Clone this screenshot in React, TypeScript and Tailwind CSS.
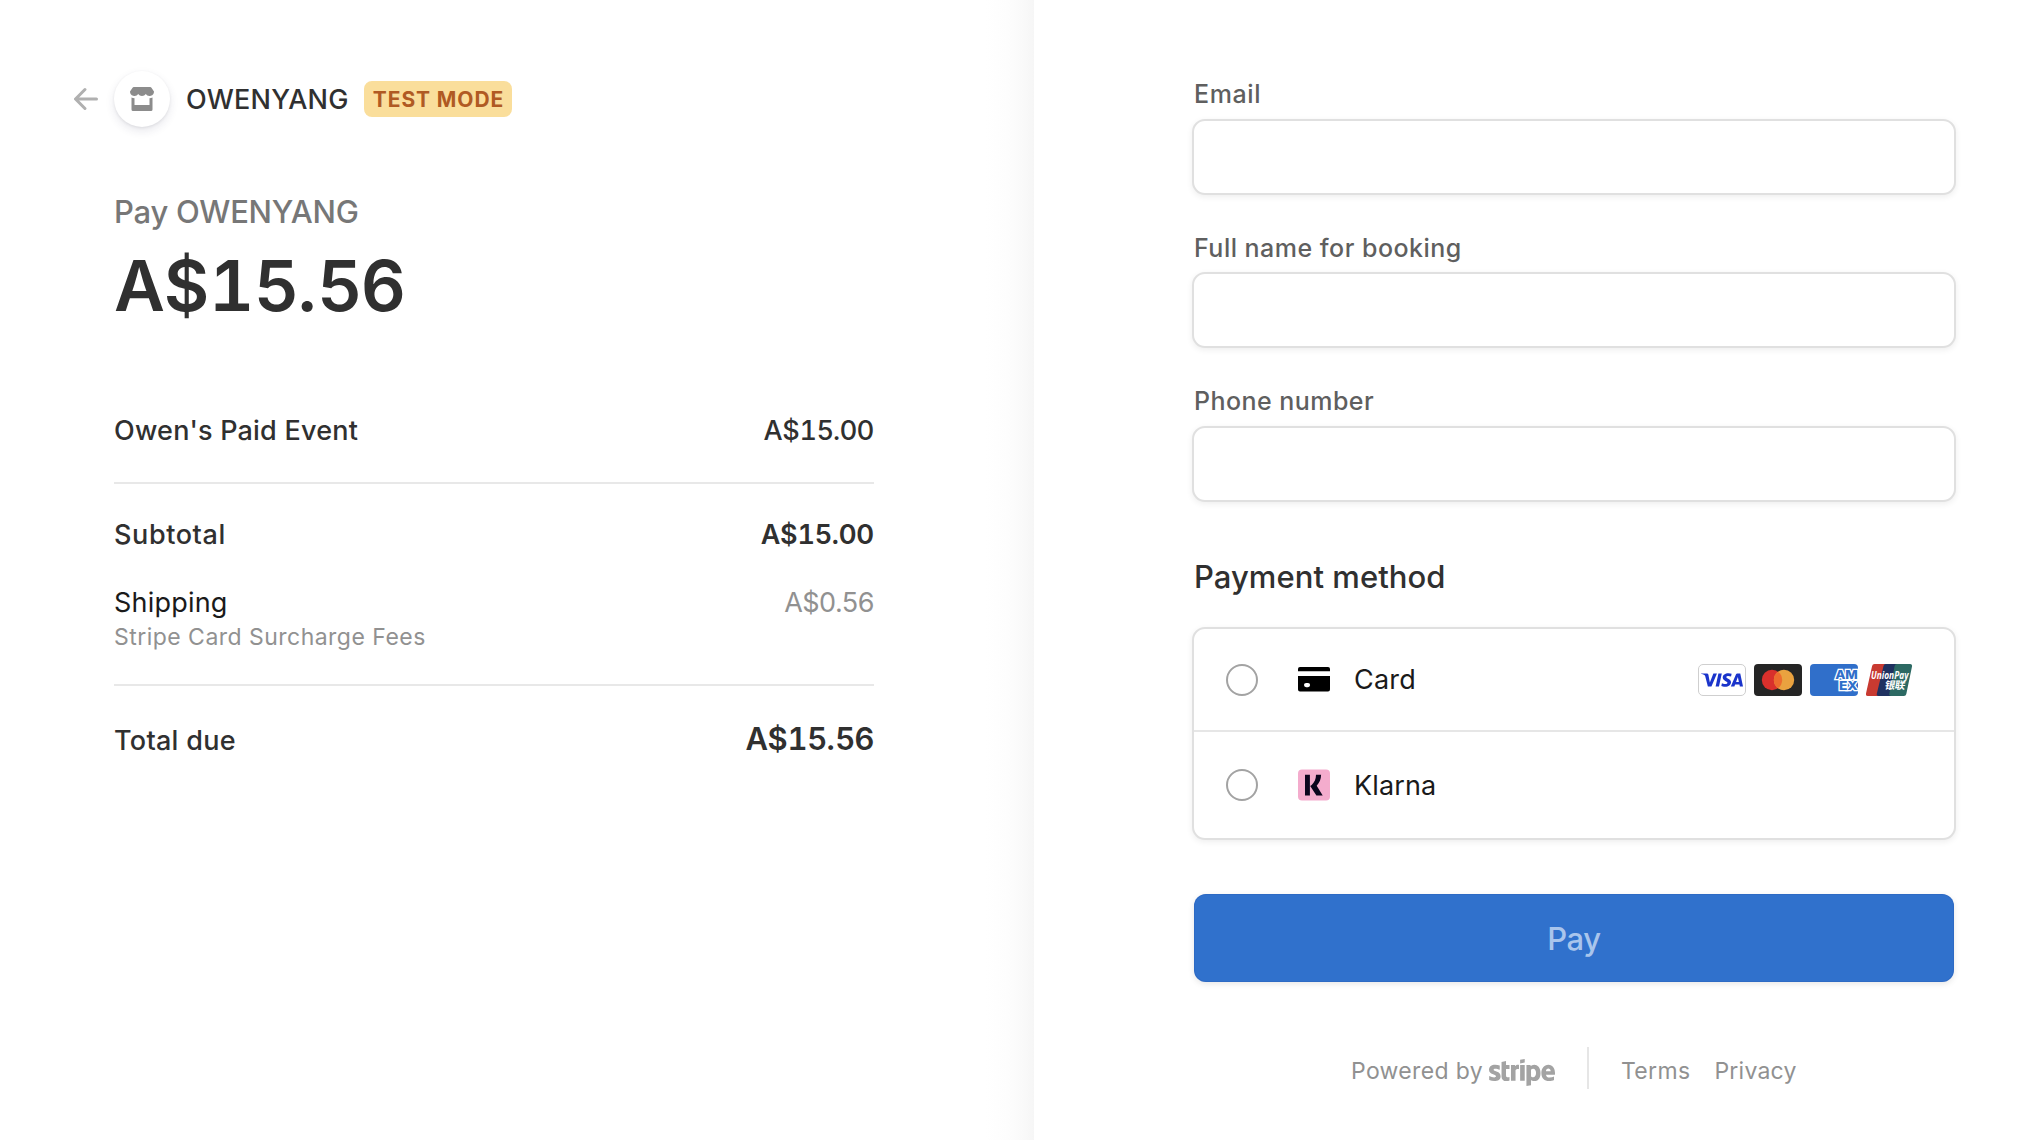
import type { ReactNode } from "react";
import { FaStripe } from "react-icons/fa";
import { SiVisa } from "react-icons/si";

function BackArrow() {
  return (
    <svg viewBox="0 0 16 16" className="size-6 fill-[#b0b0b0]">
      <path d="M3.417 7H15a1 1 0 0 1 0 2H3.417l4.591 4.591a1 1 0 0 1-1.415 1.416l-6.3-6.3a1 1 0 0 1 0-1.414l6.3-6.3A1 1 0 0 1 8.008 2.41z" />
    </svg>
  );
}

function StoreIcon() {
  return (
    <svg viewBox="0 0 16 16" className="size-6 fill-[#8c8c8c]">
      <path d="M3 7.5V12h10V7.5c.718 0 1.398-.168 2-.468V15a1 1 0 0 1-1 1H2a1 1 0 0 1-1-1V7.032c.602.3 1.282.468 2 .468zM0 3L1.703.445A1 1 0 0 1 2.535 0h10.93a1 1 0 0 1 .832.445L16 3a3 3 0 0 1-5.5 1.659C9.963 5.467 9.043 6 8 6s-1.963-.533-2.5-1.341A3 3 0 0 1 0 3z" />
    </svg>
  );
}

function CardIcon() {
  return (
    <svg viewBox="0 0 32 25" className="h-[25px] w-8">
      <path d="M2 0h28a2 2 0 0 1 2 2v2.3H0V2a2 2 0 0 1 2-2z" />
      <path
        fillRule="evenodd"
        d="M0 9.1h32v13.5a2 2 0 0 1-2 2H2a2 2 0 0 1-2-2zM8.1 16a2.1 2.1 0 0 0 0 4.2h1.9a2.1 2.1 0 0 0 0-4.2z"
      />
    </svg>
  );
}

function KlarnaIcon() {
  return (
    <svg viewBox="0 0 32 32" className="size-8">
      <rect y="0.5" width="32" height="31" rx="4" fill="#f4accd" />
      <path
        fill="#0b051d"
        d="M7 5.8h4.9v20.7H7zM18 5.8h5.1c0 4.2-1.6 8-4.4 10.9l6 9.8h-6.3l-6.2-9.4 1.5-1.2C16.5 13.5 18 9.9 18 5.8z"
      />
    </svg>
  );
}

function MastercardBadge() {
  return (
    <svg viewBox="0 0 48 32" className="h-8 w-12">
      <rect width="48" height="32" rx="4" fill="#252525" />
      <circle cx="18" cy="16" r="10.2" fill="#d9302c" />
      <circle cx="30" cy="16" r="10.2" fill="#eaa23f" />
      <path d="M24 7.75a10.2 10.2 0 0 1 0 16.5a10.2 10.2 0 0 1 0-16.5z" fill="#ed6c2e" />
    </svg>
  );
}

function AmexBadge() {
  return (
    <svg viewBox="0 0 48 32" className="h-8 w-12 rounded-[4px]">
      <rect width="48" height="32" fill="#306fca" />
      <text
        fill="#306fca"
        stroke="#fff"
        strokeWidth="2.4"
        paintOrder="stroke"
        fontFamily="Inter, sans-serif"
        fontWeight="800"
        fontSize="11.8"
      >
        <tspan x="25.2" y="15.2" textLength="22.6" lengthAdjust="spacingAndGlyphs">AM</tspan>
        <tspan x="29" y="26" textLength="18.8" lengthAdjust="spacingAndGlyphs">EX</tspan>
      </text>
    </svg>
  );
}

function UnionPayBadge() {
  return (
    <svg viewBox="0 0 48 32" className="h-8 w-12">
      <path d="M8.5 0H23L16 32H2a2 2 0 0 1-2-2.4L6.1 2a2.5 2.5 0 0 1 2.4-2z" fill="#c83a31" />
      <path d="M21 0h14l-7 32H12.5a1.8 1.8 0 0 1-1.7-2.3L17.5 2A2.5 2.5 0 0 1 20 0z" fill="#1f3160" />
      <path d="M31 0h13a2 2 0 0 1 2 2.4L40.3 30a2.5 2.5 0 0 1-2.4 2H25a1.8 1.8 0 0 1-1.7-2.3L28.6 2A2.5 2.5 0 0 1 31 0z" fill="#2c6963" />
      <text x="5" y="15.2" fill="#fff" fontFamily="Open Sans, sans-serif" fontWeight="700" fontStyle="italic" fontSize="10" textLength="37.5" lengthAdjust="spacingAndGlyphs">
        UnionPay
      </text>
      <text x="18.5" y="25.5" fill="#fff" fontFamily="Noto Sans CJK SC, sans-serif" fontWeight="700" fontSize="10.5" textLength="20.5" transform="translate(4.3 0) skewX(-10)">
        银联
      </text>
    </svg>
  );
}

/** Amount of the form A$1x.xx whose leading "1" takes a full digit's width. */
function Price({ rest, className }: { rest: string; className: string }) {
  return (
    <span className={className}>
      A$<span className="tabular-nums">1</span>
      {rest}
    </span>
  );
}

function Field({ label, labelClass, gapClass }: { label: string; labelClass: string; gapClass: string }) {
  return (
    <label className="block">
      <span className={`block h-8 pl-[2px] text-[25px] leading-8 font-medium text-[#5f5f5f] ${labelClass}`}>{label}</span>
      <input
        className={`block h-[76px] w-full rounded-[13px] border-2 border-[#e0e0e0] bg-white px-6 shadow-[0_2px_6px_rgba(0,0,0,0.07)] outline-none ${gapClass}`}
      />
    </label>
  );
}

function MethodRow({ icon, name, nameClass, className, children }: { icon: ReactNode; name: string; nameClass: string; className: string; children?: ReactNode }) {
  return (
    <div className={`flex items-center pr-[40px] pl-8 ${className}`}>
      <span className="size-8 rounded-full border-2 border-[#a3a3a3] bg-white" />
      <span className="ml-10 flex w-8 justify-center">{icon}</span>
      <span className={`ml-6 text-[27px] leading-9 text-[#1a1a1a] ${nameClass}`}>{name}</span>
      {children}
    </div>
  );
}

export default function App() {
  return (
    <div className="flex h-[1140px] w-[2032px] overflow-hidden bg-white font-['Inter',sans-serif]">
      <section className="flex w-[1034px] shrink-0 justify-between">
        <div className="ml-[74px] w-[800px] pt-[71px]">
          <header className="flex h-14 items-center">
            <BackArrow />
            <span className="ml-4 flex size-14 items-center justify-center rounded-full bg-white shadow-[0_4px_10px_rgba(50,50,93,0.11),0_1px_3px_rgba(0,0,0,0.08)]">
              <StoreIcon />
            </span>
            <span className="ml-4 w-[178px] pt-[2px] text-[27px] leading-9 font-medium tracking-[0.24px] text-[#303030]">OWENYANG</span>
            <span className="flex h-9 w-[148px] items-center justify-center rounded-[8px] bg-[#fade9b] pt-[2px] pl-px text-[21px] font-bold tracking-[0.9px] whitespace-nowrap text-[#b05a23]">
              TEST MODE
            </span>
          </header>

          <div className="ml-10">
            <h1 className="mt-[65px] h-10 text-[31px] leading-10 font-medium tracking-[-0.24px] text-[#777777]">Pay OWENYANG</h1>
            <p className="mt-[14px] h-20 text-[70px] leading-20 font-semibold text-[#303030]">
              <Price rest="5.56" className="tracking-[-0.35px]" />
            </p>

            <div className="mt-[87px] flex h-9 justify-between text-[27px] leading-9 font-medium text-[#303030]">
              <span className="tracking-[0.21px]">Owen's Paid Event</span>
              <Price rest="5.00" className="tracking-[-0.25px]" />
            </div>
            <div className="mt-[33px] h-[2px] bg-[#e8e8e8]" />
            <div className="mt-[33px] flex h-9 justify-between text-[27px] leading-9 font-medium text-[#303030]">
              <span className="tracking-[0.6px]">Subtotal</span>
              <Price rest="5.00" className="font-semibold tracking-[-0.15px]" />
            </div>
            <div className="mt-8 flex h-9 justify-between text-[27px] leading-9">
              <span className="tracking-[0.2px] text-[#1a1a1a]">Shipping</span>
              <span className="tracking-[-0.5px] text-[#919191]">A$0.56</span>
            </div>
            <p className="h-8 text-[23px] leading-[33px] tracking-[0.47px] text-[#919191]">Stripe Card Surcharge Fees</p>
            <div className="mt-[31px] h-[2px] bg-[#e8e8e8]" />
            <div className="mt-[35px] flex items-baseline justify-between leading-9 text-[#303030]">
              <span className="text-[27px] font-medium tracking-[0.28px]">Total due</span>
              <Price rest="5.56" className="text-[31px] font-semibold tracking-[-0.25px]" />
            </div>
          </div>
        </div>
        <div className="w-12 bg-[linear-gradient(to_right,#ffffff_0%,#fdfdfd_45%,#fafafa_75%,#f6f6f6_100%)]" />
      </section>

      <main className="ml-[158px] w-[764px] pt-[78px]">
        <Field label="Email" labelClass="tracking-[0.6px]" gapClass="mt-[9px]" />
        <div className="mt-[37px]">
          <Field label="Full name for booking" labelClass="tracking-[0.48px]" gapClass="mt-2" />
        </div>
        <div className="mt-[37px]">
          <Field label="Phone number" labelClass="tracking-[0.45px]" gapClass="mt-[9px]" />
        </div>

        <h2 className="mt-[55px] h-10 pl-[2px] text-[31px] leading-10 font-medium tracking-[0.05px] text-[#303030]">Payment method</h2>
        <div className="mt-[30px] h-[213px] rounded-[13px] border-2 border-[#e0e0e0] bg-white shadow-[0_2px_6px_rgba(0,0,0,0.07)]">
          <MethodRow icon={<CardIcon />} name="Card" nameClass="tracking-[0.23px]" className="h-[103px] border-b-2 border-[#e6e6e6]">
            <span className="ml-auto flex gap-2">
              <span className="flex h-8 w-12 items-center justify-center rounded-[5px] border border-[#cfcfcf] bg-white">
                <SiVisa className="size-[42px] text-[#1a34cb]" />
              </span>
              <MastercardBadge />
              <AmexBadge />
              <UnionPayBadge />
            </span>
          </MethodRow>
          <MethodRow icon={<KlarnaIcon />} name="Klarna" nameClass="pt-[2px] tracking-[0.12px]" className="h-[106px]" />
        </div>

        <button className="mx-[2px] mt-[54px] block h-[88px] w-[760px] rounded-[12px] bg-[#3071cc] pt-[2px] text-[31px] font-medium tracking-[-0.4px] text-[#a9c5ec] shadow-[inset_0_0_0_1px_rgba(40,90,180,0.3),0_2px_6px_rgba(0,0,0,0.1)]">
          Pay
        </button>

        <footer className="mt-[65px] flex h-[42px] items-center pl-[159px] text-[23px] leading-8 text-[#919191]">
          <span className="pt-[5px] tracking-[0.34px] whitespace-nowrap">Powered by</span>
          <span className="ml-[6px] flex h-[27px] w-[66px] items-center justify-center pt-2">
            <FaStripe className="h-[53px] w-[66px] shrink-0 text-[#a3a3a3]" />
          </span>
          <span className="ml-8 h-[42px] w-[2px] bg-[#e6e6e6]" />
          <span className="ml-8 pt-[5px] tracking-[0.34px]">Terms</span>
          <span className="ml-6 pt-[5px] tracking-[0.22px]">Privacy</span>
        </footer>
      </main>
    </div>
  );
}
